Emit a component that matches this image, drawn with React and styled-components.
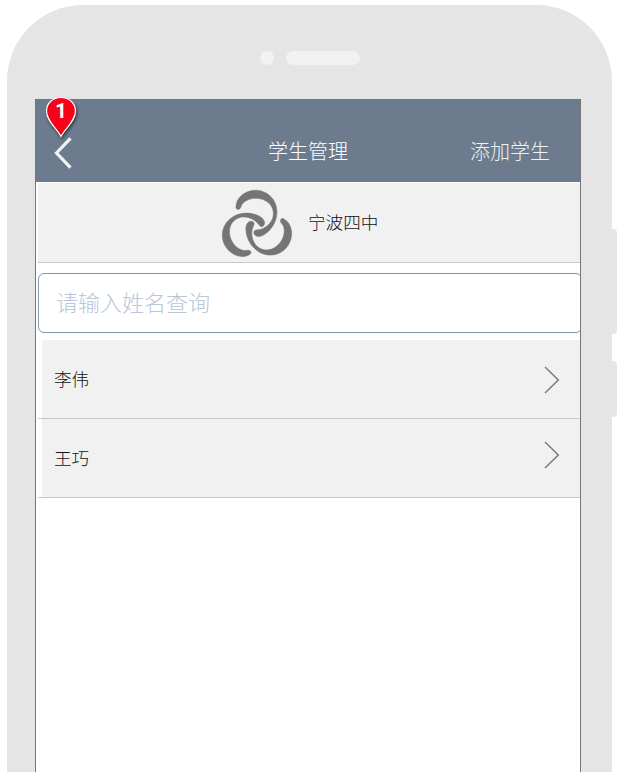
import React from "react";
import styled, { createGlobalStyle } from "styled-components";

const GlobalStyle = createGlobalStyle`
  * { box-sizing: border-box; }
  body { margin: 0; background: #fff; }
`;

const Stage = styled.main`
  position: relative;
  width: 621px;
  height: 772px;
  padding: 5px 9px 0 7px;
  overflow: hidden;
  font-family: "Noto Sans CJK SC", sans-serif;
  font-weight: 300;
  color: #111;
`;

const Phone = styled.div`
  width: 605px;
  height: 900px;
  padding: 0 31px 0 28px;
  border-radius: 76px;
  background: #e5e5e5;
`;

const SideButton = styled.div`
  position: absolute;
  left: 611px;
  top: ${(p) => p.$top}px;
  width: 6px;
  height: ${(p) => p.$height}px;
  border-radius: 0 4px 4px 0;
  background: #e5e5e5;
`;

const Speaker = styled.div`
  display: flex;
  gap: 12px;
  height: 94px;
  padding: 45.5px 0 0 224.5px;
`;

const SpeakerPart = styled.span`
  width: ${(p) => p.$width}px;
  height: 14.5px;
  border-radius: 8px;
  background: #f1f1f1;
`;

const Screen = styled.section`
  width: 546px;
  height: 780px;
  border: 1px solid #777;
  background: #fff;
  overflow: hidden;
`;

const Header = styled.header`
  display: grid;
  grid-template-columns: 1fr 80px 1fr;
  align-items: center;
  height: 82px;
  padding: 19px 30px 0 17px;
  background: #6c7c8e;
  color: #fff;
  font-size: 20px;
  line-height: 30px;
`;

const BackButton = styled.button`
  display: flex;
  width: 22px;
  height: 34px;
  margin-top: 5px;
  padding: 0;
  border: 0;
  background: none;
`;

const Title = styled.h1`
  margin: 0 -6.5px 0 6.5px;
  font: inherit;
  white-space: nowrap;
`;

const AddStudent = styled.span`
  justify-self: end;
  color: #eff1f2;
`;

const School = styled.div`
  display: flex;
  align-items: center;
  gap: 15px;
  height: 80px;
  margin: 1px 0 0 2px;
  padding-left: 183px;
  border-bottom: 1px solid #c8c8c8;
  background: #f1f1f1;
  font-size: 17.6px;
`;

const SchoolName = styled.span`
  margin-bottom: 2px;
`;

const Search = styled.input`
  display: block;
  width: 544px;
  height: 60px;
  margin: 10px 0 7px 2px;
  padding: 0 17px 5px;
  border: 1px solid #8496a8;
  border-radius: 6px;
  outline: 0;
  background: #fff;
  font: 300 22px "Noto Sans CJK SC", sans-serif;
  &::placeholder { color: #b8c6d8; opacity: 1; }
`;

const List = styled.ul`
  margin: 0 0 0 2px;
  padding: 0;
  list-style: none;
`;

const Row = styled.li`
  height: 79px;
  padding-left: 4px;
  border-bottom: 1px solid #c8c8c8;
`;

const RowBody = styled.div`
  display: flex;
  align-items: center;
  justify-content: space-between;
  height: 100%;
  padding: 0 20px 0 12px;
  background: #f1f1f1;
  font-size: 17.6px;
`;

const StudentName = styled.span`
  margin-bottom: 2px;
`;

const Chevron = styled.svg`
  margin-top: ${(p) => p.$shift}px;
`;

const Marker = styled.div`
  position: absolute;
  left: 42px;
  top: 92.5px;
  width: 40px;
  height: 50px;
`;

const MarkerShape = styled.svg`
  display: block;
  filter: drop-shadow(1px 2px 1.5px rgba(0, 0, 0, 0.55));
`;

const MarkerNumber = styled.span`
  position: absolute;
  left: 0;
  top: 6.5px;
  width: 38px;
  text-align: center;
  color: #fff;
  font: bold 21px/24px Roboto, sans-serif;
`;

const swirlArm =
  "M57 62 C58 36 84 14 117 14 C154 15 180 44 180 80 C179 112 160 138 137 150 C127 155 114 154 111 144 C109 136 114 134 122 133 C143 131 160 116 167 98 C173 78 166 59 149 48 C128 34 96 35 78 53 C72 59 72 71 64 72 C58 72 56 68 57 62Z";

function SchoolLogo() {
  return (
    <svg width="72" height="68" viewBox="12 10.5 216 204" fill="#757575" stroke="#757575" strokeWidth="1.5">
      {[0, 120, 240].map((angle) => (
        <path key={angle} d={swirlArm} transform={`rotate(${angle} 118.5 124)`} />
      ))}
    </svg>
  );
}

const students = [
  { name: "李伟", shift: 1 },
  { name: "王巧", shift: -7 },
];

export default function App() {
  return (
    <Stage>
      <GlobalStyle />
      <Phone>
        <Speaker>
          <SpeakerPart $width={14.5} />
          <SpeakerPart $width={74} />
        </Speaker>
        <Screen>
          <Header>
            <BackButton aria-label="返回">
              <svg width="22" height="34" viewBox="0 0 22 34" fill="none" stroke="#f0f3f4" strokeWidth="3.2">
                <path d="M17.5 2.3 3.5 17 17.5 31.7" />
              </svg>
            </BackButton>
            <Title>学生管理</Title>
            <AddStudent>添加学生</AddStudent>
          </Header>
          <School>
            <SchoolLogo />
            <SchoolName>宁波四中</SchoolName>
          </School>
          <Search placeholder="请输入姓名查询" />
          <List>
            {students.map(({ name, shift }) => (
              <Row key={name}>
                <RowBody>
                  <StudentName>{name}</StudentName>
                  <Chevron $shift={shift} width="16" height="28" viewBox="0 0 16 28" fill="none" stroke="#777" strokeWidth="1.4">
                    <path d="M1 1 14.3 14 1 27" />
                  </Chevron>
                </RowBody>
              </Row>
            ))}
          </List>
        </Screen>
      </Phone>
      <SideButton $top={229} $height={105} />
      <SideButton $top={361} $height={56} />
      <Marker>
        <MarkerShape width="40" height="50" viewBox="0 0 40 50">
          <path
            d="M19 43.5 C14.5 35 4.5 28 4.5 18 C4.5 10 11 4.5 19 4.5 C27 4.5 33.5 10 33.5 18 C33.5 28 23.5 35 19 43.5Z"
            fill="#fb0019"
            stroke="#fff"
            strokeWidth="1.2"
          />
        </MarkerShape>
        <MarkerNumber>1</MarkerNumber>
      </Marker>
    </Stage>
  );
}
